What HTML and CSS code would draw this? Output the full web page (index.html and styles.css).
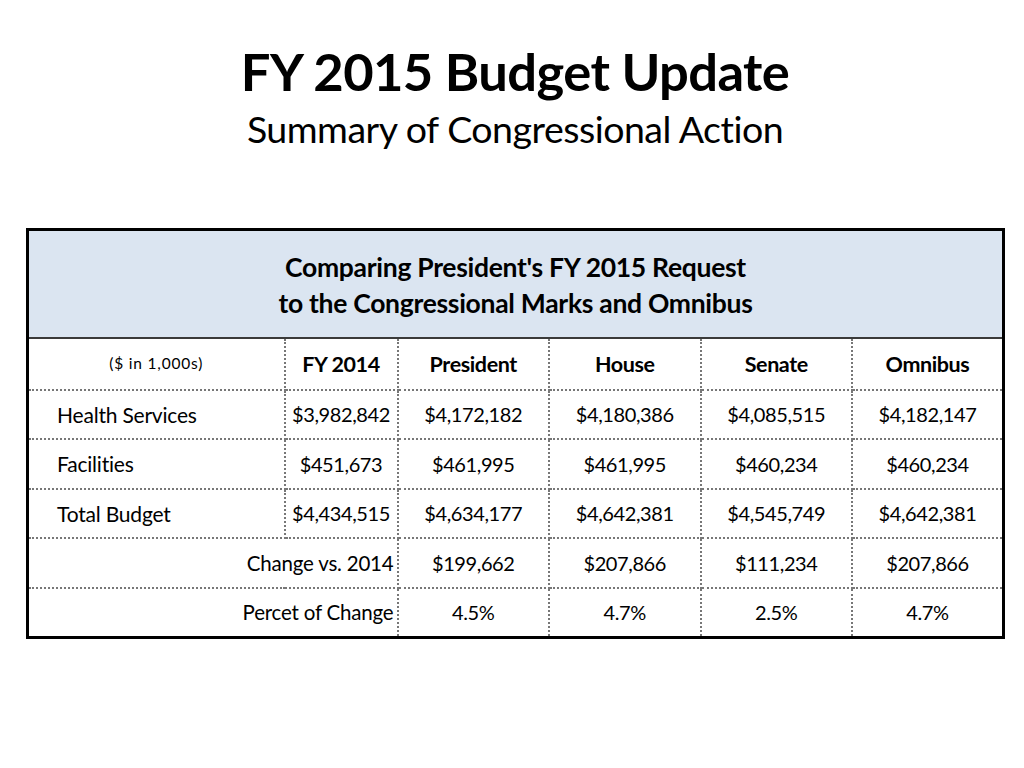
FILE: index.html
```html
<!DOCTYPE html>
<html>
<head>
<meta charset="utf-8">
<link rel="stylesheet" href="styles.css">
</head>
<body>
<header class="titles">
  <h1 class="title">FY 2015 Budget Update</h1>
  <p class="subtitle">Summary of Congressional Action</p>
</header>
<main class="table-wrap">
  <table class="budget">
    <colgroup>
      <col class="c-label">
      <col class="c-fy">
      <col class="c-num">
      <col class="c-num">
      <col class="c-num">
      <col class="c-num">
    </colgroup>
    <thead>
      <tr class="banner">
        <th colspan="6">Comparing President's FY 2015 Request<br>to the Congressional Marks and Omnibus</th>
      </tr>
      <tr class="heads">
        <th class="units">($ in 1,000s)</th>
        <th>FY 2014</th>
        <th>President</th>
        <th>House</th>
        <th>Senate</th>
        <th>Omnibus</th>
      </tr>
    </thead>
    <tbody>
      <tr>
        <td class="label">Health Services</td>
        <td class="fy">$3,982,842</td>
        <td>$4,172,182</td>
        <td>$4,180,386</td>
        <td>$4,085,515</td>
        <td>$4,182,147</td>
      </tr>
      <tr>
        <td class="label">Facilities</td>
        <td class="fy">$451,673</td>
        <td>$461,995</td>
        <td>$461,995</td>
        <td>$460,234</td>
        <td>$460,234</td>
      </tr>
      <tr>
        <td class="label">Total Budget</td>
        <td class="fy">$4,434,515</td>
        <td>$4,634,177</td>
        <td>$4,642,381</td>
        <td>$4,545,749</td>
        <td>$4,642,381</td>
      </tr>
      <tr>
        <td class="summary" colspan="2">Change vs. 2014</td>
        <td>$199,662</td>
        <td>$207,866</td>
        <td>$111,234</td>
        <td>$207,866</td>
      </tr>
      <tr>
        <td class="summary" colspan="2">Percet of Change</td>
        <td>4.5%</td>
        <td>4.7%</td>
        <td>2.5%</td>
        <td>4.7%</td>
      </tr>
    </tbody>
  </table>
</main>
</body>
</html>
```
FILE: styles.css
```css
html, body {
  margin: 0;
  padding: 0;
  background: #ffffff;
}

body {
  font-family: Lato, "Open Sans", "Liberation Sans", sans-serif;
  color: #000;
  width: 1024px;
  height: 768px;
}

.titles {
  text-align: center;
  padding-top: 42px;
  padding-left: 6px;
}

.title {
  margin: 0;
  font-size: 52.5px;
  font-weight: 700;
  line-height: 58px;
  letter-spacing: -0.6px;
}

.subtitle {
  margin: 6px 0 0;
  font-size: 37.5px;
  line-height: 46px;
  letter-spacing: -0.5px;
}

.table-wrap {
  padding: 76px 0 0 26px;
}

.budget {
  border-collapse: collapse;
  table-layout: fixed;
  width: 976px;
  border: 3px solid #000;
}

.c-label { width: 257px; }
.c-fy { width: 113px; }
.c-num { width: 151.5px; }

.budget th,
.budget td {
  padding: 0;
  text-align: center;
  border: 2px dotted #777;
  height: 47.5px;
  font-size: 20px;
  letter-spacing: -0.4px;
}

.banner th {
  background: #dbe5f1;
  border: 3px solid #000;
  border-bottom: 2px solid #3a3a3a;
  height: 104px;
  font-size: 26.5px;
  font-weight: 700;
  line-height: 36px;
  letter-spacing: -0.3px;
  padding-top: 2px;
}

.heads th {
  font-weight: 700;
  font-size: 21.5px;
  border-top: 2px solid #3a3a3a;
}

.heads th.units {
  font-weight: 400;
  font-size: 15.5px;
  letter-spacing: 0.8px;
  padding-bottom: 2px;
}

.budget td.label {
  text-align: left;
  padding-left: 28px;
  font-size: 21px;
  letter-spacing: -0.2px;
}

.budget td.summary {
  text-align: right;
  padding-right: 3px;
  font-size: 20.5px;
  letter-spacing: -0.2px;
}
```
